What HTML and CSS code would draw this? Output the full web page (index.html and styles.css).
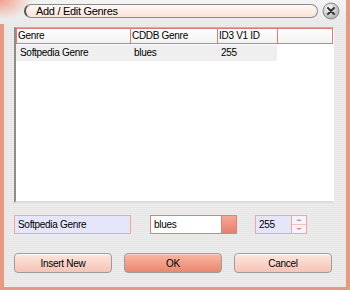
FILE: index.html
```html
<!DOCTYPE html>
<html lang="en">
<head>
    <meta charset="UTF-8">
    <title>Add / Edit Genres</title>
    <link rel="stylesheet" href="styles.css">
</head>
<body>
    <div class="window">
        <div class="titlebar">
            <div class="title-pill">Add / Edit Genres</div>
            <div class="close-btn">
                <svg width="18" height="18" viewBox="0 0 18 18">
                    <defs>
                        <radialGradient id="cg" cx="0.4" cy="0.35" r="0.7">
                            <stop offset="0" stop-color="#ffffff"/>
                            <stop offset="1" stop-color="#a8a8a8"/>
                        </radialGradient>
                    </defs>
                    <circle cx="9" cy="9" r="8" fill="url(#cg)" stroke="#8c8c8c"/>
                    <path d="M6 6 L12 12 M12 6 L6 12" stroke="#333" stroke-width="2" stroke-linecap="round"/>
                </svg>
            </div>
        </div>

        <div class="content">
            <div class="list">
                <div class="list-head">
                    <div class="col c1">Genre</div>
                    <div class="col c2">CDDB Genre</div>
                    <div class="col c3">ID3 V1 ID</div>
                    <div class="col c4"></div>
                </div>
                <div class="list-row">
                    <div class="cell c1">Softpedia Genre</div>
                    <div class="cell c2">blues</div>
                    <div class="cell c3">255</div>
                </div>
            </div>

            <div class="edit-row">
                <div class="field name-field">Softpedia Genre</div>
                <div class="combo">
                    <div class="field combo-text">blues</div>
                    <div class="combo-btn"></div>
                </div>
                <div class="spin">
                    <div class="field spin-text">255</div>
                    <div class="spin-btns">
                        <div class="spin-up"><span></span></div>
                        <div class="spin-down"><span></span></div>
                    </div>
                </div>
            </div>

            <div class="btn-row">
                <button class="btn">Insert New</button>
                <button class="btn btn-ok">OK</button>
                <button class="btn">Cancel</button>
            </div>
        </div>
    </div>
</body>
</html>
```

FILE: styles.css
```css
body {
    margin: 0;
    padding: 0;
    font-family: "Liberation Sans", Arial, sans-serif;
    font-size: 10px;
    letter-spacing: -0.3px;
    color: #000;
}
.window {
    width: 350px;
    height: 290px;
    box-sizing: border-box;
    border-left: 4px solid #e59a84;
    border-right: 4px solid #e59a84;
    border-bottom: 3px solid #e59a84;
    box-shadow: inset 1px 0 0 #f8e0d8, inset -1px 0 0 #f8e0d8;
    background: repeating-linear-gradient(to bottom, #ececec 0, #ececec 1px, #e6e6e6 1px, #e6e6e6 2px);
    display: flex;
    flex-direction: column;
}
.titlebar {
    height: 24px;
    display: flex;
    align-items: center;
    margin-left: -4px;
    padding-left: 24px;
    padding-right: 6px;
    background: radial-gradient(ellipse 34px 20px at 0 0, #f0a08a 0%, rgba(240, 160, 138, 0) 100%),
                linear-gradient(to bottom, #f4f4f4, #e9e9e9);
}
.title-pill {
    flex: 1;
    height: 12px;
    line-height: 12px;
    margin-top: -2px;
    padding-left: 10px;
    font-size: 11px;
    border: 1px solid #8a8a8a;
    border-left: 2px solid #555;
    border-radius: 7px;
    background: linear-gradient(to bottom, #fff8f4, #fbe3d8);
}
.close-btn {
    width: 18px;
    height: 18px;
    margin-left: 4px;
    margin-top: -3px;
}
.content {
    flex: 1;
    padding: 3px 12px 0 10px;
}
.list {
    height: 176px;
    box-sizing: border-box;
    background: #fff;
    border-left: 2px solid #8c8c8c;
    border-top: 1px solid #b4b4b4;
    border-right: 1px solid #fff;
    border-bottom: 2px solid #dcdcdc;
}
.list-head {
    display: flex;
    height: 16px;
}
.col {
    box-sizing: border-box;
    height: 16px;
    line-height: 14px;
    padding-left: 1px;
    border: 1px solid #e07a7a;
    border-right: none;
    background: linear-gradient(to bottom, #ffffff, #f2f2f2);
}
.col.c4 {
    flex: 1;
    border-right: 1px solid #e07a7a;
}
.c1 { width: 114px; }
.c2 { width: 87px; }
.c3 { width: 60px; }
.list-row {
    display: flex;
    height: 16px;
    margin-top: 1px;
    line-height: 16px;
    background: #efefef;
    width: 261px;
}
.cell {
    padding-left: 4px;
    box-sizing: border-box;
}
.edit-row {
    display: flex;
    align-items: center;
    margin-top: 11px;
    height: 20px;
}
.field {
    box-sizing: border-box;
    height: 19px;
    line-height: 17px;
    padding-left: 3px;
    border: 1px solid #f3a5a0;
    background: #e6e6fa;
}
.name-field {
    width: 117px;
}
.combo {
    display: flex;
    margin-left: 19px;
}
.combo-text {
    width: 72px;
    background: #fff;
    border-color: #d98080;
}
.combo-btn {
    width: 15px;
    height: 19px;
    box-sizing: border-box;
    border: 1px solid #d98080;
    border-left: none;
    background: linear-gradient(to bottom, #f6a898, #e6806e);
}
.spin {
    display: flex;
    margin-left: 18px;
}
.spin-text {
    width: 37px;
}
.spin-btns {
    width: 15px;
    height: 19px;
    box-sizing: border-box;
    border: 1px solid #f3a5a0;
    border-left: none;
    background: #f4f4fc;
    display: flex;
    flex-direction: column;
}
.spin-up, .spin-down {
    flex: 1;
    display: flex;
    align-items: center;
    justify-content: center;
}
.spin-up {
    border-bottom: 1px solid #f3c0bc;
}
.spin-up span {
    width: 0;
    height: 0;
    border-left: 3px solid transparent;
    border-right: 3px solid transparent;
    border-bottom: 2px solid #e08c84;
}
.spin-down span {
    width: 0;
    height: 0;
    border-left: 3px solid transparent;
    border-right: 3px solid transparent;
    border-top: 2px solid #e08c84;
}
.btn-row {
    display: flex;
    gap: 12px;
    margin-top: 19px;
}
.btn {
    width: 98px;
    height: 20px;
    padding: 0;
    font-family: "Liberation Sans", Arial, sans-serif;
    font-size: 10px;
    letter-spacing: -0.3px;
    color: #000;
    border: 1px solid #9c9c9c;
    border-radius: 4px;
    background: linear-gradient(to bottom, #fde6de, #f5c4b6);
    box-shadow: inset 0 1px 0 #fff;
}
.btn-ok {
    background: linear-gradient(to bottom, #fab6a2, #e8876f);
    box-shadow: inset 0 1px 0 #fcd0c2;
}
```
